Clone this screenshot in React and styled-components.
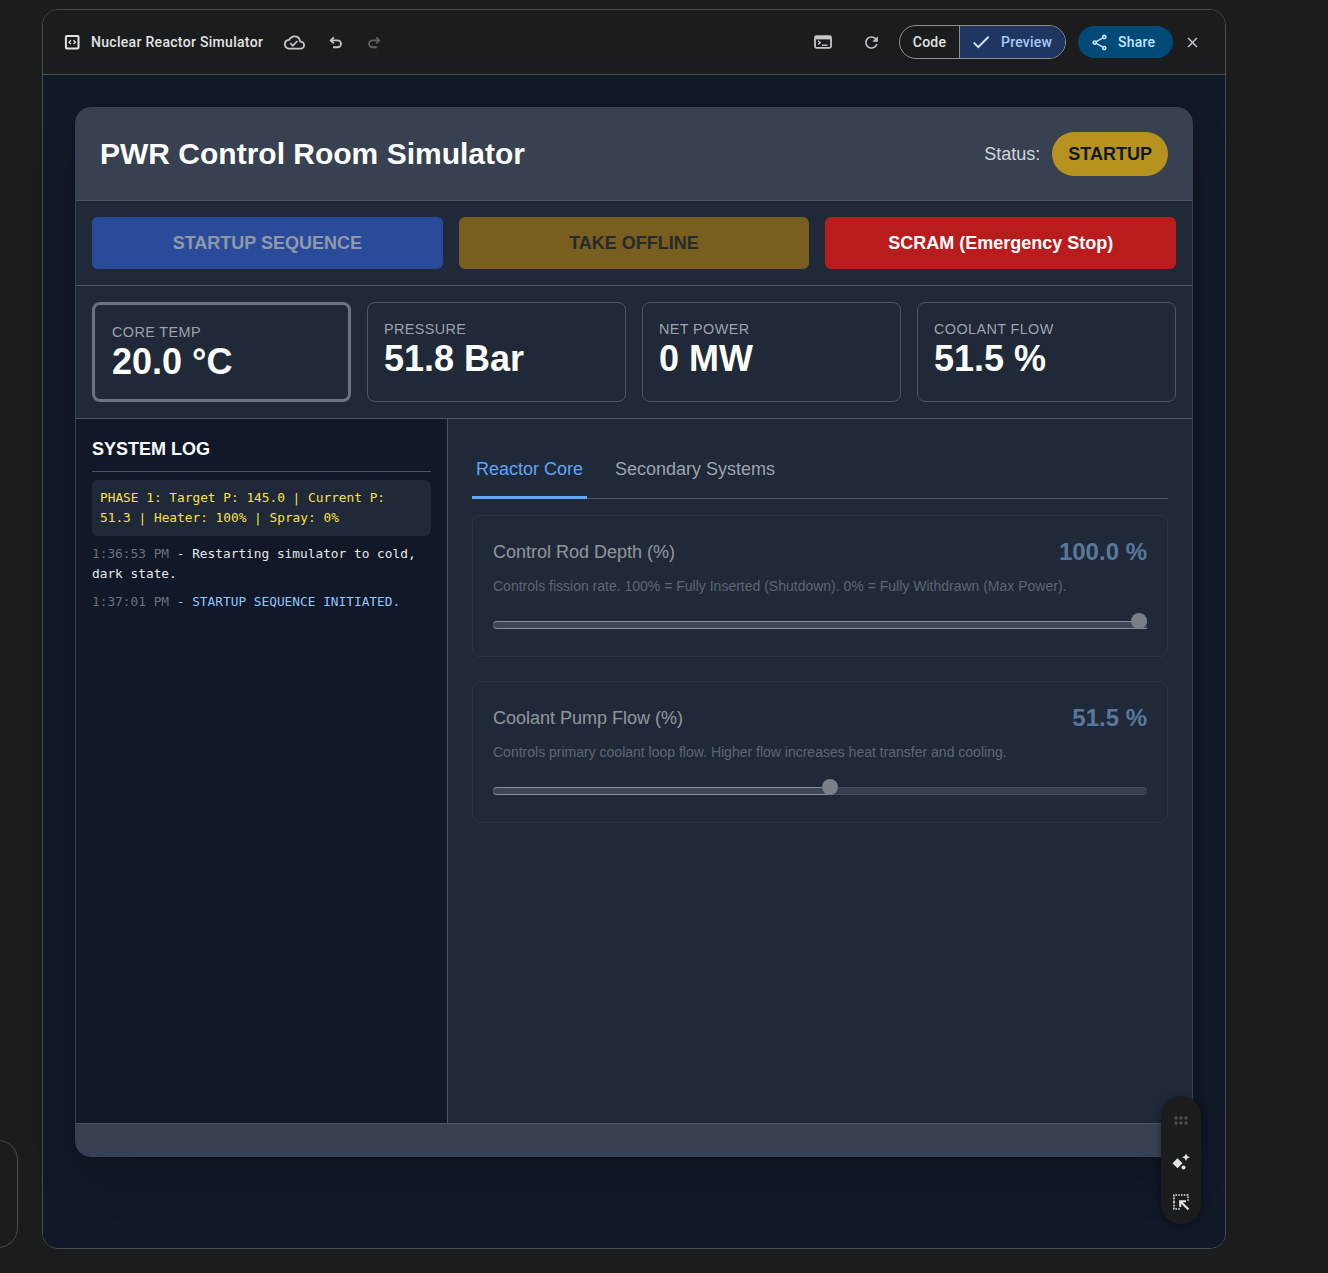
import React from 'react';
import styled, { createGlobalStyle } from 'styled-components';
import { MdOutlineCloudDone, MdRefresh, MdCheck, MdOutlineShare, MdClose } from 'react-icons/md';

const Global = createGlobalStyle`
  html, body { margin: 0; padding: 0; background: #1b1c1d; }
  body { width: 1328px; height: 1273px; overflow: hidden; position: relative; font-family: "Liberation Sans", Arial, sans-serif; }
  * { box-sizing: border-box; }
`;

const Page = styled.div`
  padding: 9px 102px 24px 42px;
  height: 1273px;
`;
const Modal = styled.div`
  position: relative;
  height: 1240px;
  border: 1px solid #4a4b4d;
  border-radius: 16px;
  display: flex;
  flex-direction: column;
  background: #111827;
`;
const TopBar = styled.header`
  height: 65px;
  flex: none;
  background: #1b1c1d;
  border-bottom: 1px solid #4a4b4d;
  border-radius: 15px 15px 0 0;
  display: flex;
  align-items: center;
  padding: 0 24px 0 21px;
  font-family: Roboto, sans-serif;
  letter-spacing: .2px;
`;
const AppIcon = styled.svg`
  width: 16px; height: 16px; flex: none; margin-right: 11px;
`;
const AppName = styled.span`
  color: #e3e3e3; font-size: 14px; font-weight: 500; letter-spacing: .3px; margin-right: 21px; white-space: nowrap;
`;
const BarIcon = styled.span`
  display: inline-flex;
  color: ${p => p.$c || '#c4c7c5'};
  font-size: ${p => p.$s || 18}px;
  margin-right: ${p => p.$mr || 0}px;
`;
const Spacer = styled.div`flex: 1;`;
const Toggle = styled.div`
  display: flex; height: 34px; width: 167px; border: 1px solid #8e918f; border-radius: 17px; overflow: hidden; margin-right: 12px;
`;
const ToggleCode = styled.div`
  width: 60px; border-right: 1px solid #8e918f; color: #e3e3e3; font-size: 14px; font-weight: 500;
  display: flex; align-items: center; justify-content: center;
`;
const TogglePreview = styled.div`
  flex: 1; background: #1f3760; color: #a8c7fa; font-size: 14px; font-weight: 500;
  display: flex; align-items: center; gap: 9px; padding-left: 10px;
  & svg { color: #d3e3fd; }
`;
const ShareBtn = styled.div`
  width: 95px; height: 32px; border-radius: 16px; background: #004a77; color: #c2e7ff; font-size: 14px; font-weight: 500;
  display: flex; align-items: center; gap: 9px; padding-left: 12px; margin-right: 11px;
`;
const Stage = styled.div`
  flex: 1; padding: 32px; background: #111827; border-radius: 0 0 15px 15px;
`;
const Sim = styled.div`
  height: 1050px; border-radius: 16px; overflow: hidden; background: #374151; border: 1px solid #374151;
  display: flex; flex-direction: column; box-shadow: 0 25px 50px -12px rgba(0,0,0,.25);
`;
const SimHeader = styled.div`
  height: 93px; flex: none; background: #374151; border-bottom: 1px solid #4b5563;
  display: flex; align-items: center; justify-content: space-between; padding: 0 24px;
`;
const Title = styled.h1`
  margin: 0; color: #fff; font-size: 30px; font-weight: 700;
`;
const StatusWrap = styled.div`
  display: flex; align-items: center; gap: 12px; color: #d1d5db; font-size: 18px;
`;
const Badge = styled.div`
  height: 44px; padding: 0 16px; border-radius: 22px; background: #b7921f; color: #111827; font-size: 18px; font-weight: 700;
  display: flex; align-items: center;
`;
const Controls = styled.div`
  height: 85px; flex: none; background: #1f2937; border-bottom: 1px solid #4b5563;
  display: grid; grid-template-columns: repeat(3, 1fr); gap: 16px; padding: 16px;
`;
const ActionBtn = styled.div`
  height: 52px; border-radius: 6px; background: ${p => p.$bg}; color: ${p => p.$fg}; font-size: 18px; font-weight: 700;
  display: flex; align-items: center; justify-content: center;
`;
const Stats = styled.div`
  height: 133px; flex: none; background: #1f2937; border-bottom: 1px solid #4b5563;
  display: grid; grid-template-columns: repeat(4, 1fr); gap: 16px; padding: 16px;
`;
const Stat = styled.div`
  height: 100px; background: #1f2937; border-radius: 8px;
  border: ${p => p.$hot ? '3px solid #6b7280' : '1px solid #4b5563'};
  padding: ${p => p.$hot ? '19px 17px' : '18px 16px'};
`;
const StatLabel = styled.div`
  color: #9ca3af; font-size: 14.4px; line-height: 17px; letter-spacing: .4px;
`;
const StatValue = styled.div`
  color: #fff; font-size: 36px; font-weight: 700; line-height: 42px;
`;
const Main = styled.div`
  flex: 1; display: grid; grid-template-columns: 372px 1fr; min-height: 0; background: #1f2937;
`;
const LogPane = styled.aside`
  background: #111827; border-right: 1px solid #4b5563; padding: 16px;
`;
const LogTitle = styled.h2`
  margin: 0 0 8px; color: #fff; font-size: 18px; font-weight: 700; line-height: 28px; padding-bottom: 8px; border-bottom: 1px solid #4b5563;
`;
const LogBody = styled.div`
  font-family: "DejaVu Sans Mono", monospace; font-size: 12.8px; line-height: 20px;
`;
const LogPhase = styled.div`
  background: #1f2937; border-radius: 6px; padding: 8px; color: #fde047; margin-bottom: 8px;
`;
const LogLine = styled.div`
  color: ${p => p.$c || '#e5e7eb'}; margin-bottom: 8px;
`;
const LogTime = styled.span`
  color: #6b7280;
`;
const RightPane = styled.section`
  padding: 16px 24px;
`;
const Tabs = styled.div`
  display: flex; border-bottom: 1px solid #4b5563; margin-bottom: 16px; height: 64px; padding-top: 5px;
`;
const Tab = styled.div`
  padding: 17px 4px 0; margin-right: 24px; font-size: 18px; line-height: 24px; height: 59px;
  color: ${p => p.$on ? '#60a5fa' : '#9ca3af'};
  border-bottom: 3px solid ${p => p.$on ? '#60a5fa' : 'transparent'};
  margin-bottom: -1px;
`;
const Card = styled.div`
  height: 142px; border: 1px solid #374151; border-radius: 8px; padding: 20px; margin-bottom: 24px; background: #1f2937; opacity: .5;
`;
const CardHead = styled.div`
  display: flex; justify-content: space-between; align-items: center; height: 32px;
`;
const CardLabel = styled.div`
  color: #fff; font-size: 18px; font-weight: 400;
`;
const CardValue = styled.div`
  color: #93c5fd; font-size: 24px; font-weight: 700;
`;
const CardHelp = styled.div`
  color: #9ca3af; font-size: 14px; line-height: 20px; margin-top: 8px;
`;
const Track = styled.div`
  position: relative; height: 8px; margin-top: 25px; border-radius: 4px; background: #4b5563;
  border-top: 1px solid #6b7280; border-bottom: 1px solid #6b7280;
`;
const Fill = styled.div`
  height: 8px; margin-top: -1px; border-radius: 4px 0 0 4px; background: #5b6575;
  border-top: 1px solid #f3f4f6; border-bottom: 1px solid #f3f4f6;
`;
const Thumb = styled.div`
  position: absolute; top: -9px; width: 16px; height: 16px; border-radius: 50%; background: #d1d5db;
`;
const SimFooter = styled.div`
  height: 33px; flex: none; background: #374151; border-top: 1px solid #4b5563;
`;
const Floater = styled.div`
  position: absolute; left: 1118px; top: 1086px; width: 40px; height: 128px; border-radius: 20px; background: #1b1c1d;
  box-shadow: 0 2px 8px rgba(0,0,0,.35);
  display: flex; flex-direction: column; align-items: center; padding-top: 20px;
`;
const FloatIcon = styled.svg`
  flex: none; margin-top: ${p => p.$mt || 0}px;
`;
const SideStub = styled.div`
  position: absolute; left: -30px; top: 1140px; width: 48px; height: 108px; border: 1px solid #4a4b4d; border-radius: 20px;
`;

const Slider = ({ pct }) => (
  <Track>
    <Fill style={{ width: `${pct}%` }} />
    <Thumb style={{ left: `calc(${pct}% - ${pct * 0.16}px)` }} />
  </Track>
);

const Turn = ({ flip, color }) => (
  <svg width="16" height="16" viewBox="0 0 16 16" fill="none" stroke={color} strokeWidth="1.9" style={flip ? { transform: 'scaleX(-1)' } : undefined}>
    <path d="M5.8 3.4 2.8 6.4l3 3" />
    <path d="M2.8 6.4h6.7a3.2 3.2 0 0 1 0 6.9H5" />
  </svg>
);

export default function App() {
  return (
    <>
      <Global />
      <SideStub />
      <Page>
        <Modal>
          <TopBar>
            <AppIcon viewBox="0 0 16 16">
              <rect x="1.9" y="2" width="12.6" height="12.4" rx="1" fill="none" stroke="#e3e3e3" strokeWidth="2" />
              <path d="M6.9 6.3 5 8.2l1.9 1.9M9.5 6.3l1.9 1.9-1.9 1.9" fill="none" stroke="#e3e3e3" strokeWidth="1.3" />
            </AppIcon>
            <AppName>Nuclear Reactor Simulator</AppName>
            <BarIcon $s={21} $mr={23}><MdOutlineCloudDone /></BarIcon>
            <BarIcon $mr={22}><Turn color="#c4c7c5" /></BarIcon>
            <BarIcon><Turn flip color="#5f6368" /></BarIcon>
            <Spacer />
            <BarIcon $mr={30}>
              <svg width="18" height="18" viewBox="0 0 18 18">
                <rect x="1" y="3.2" width="16" height="11.6" rx="1.5" fill="none" stroke="#c4c7c5" strokeWidth="1.8" />
                <rect x="1" y="3" width="16" height="3.4" fill="#c4c7c5" />
                <path d="m4 7.8 2.3 1.9L4 11.6" fill="none" stroke="#c4c7c5" strokeWidth="1.3" />
                <path d="M8 12.2h5.5" stroke="#c4c7c5" strokeWidth="1.4" />
              </svg>
            </BarIcon>
            <BarIcon $s={19} $mr={18}><MdRefresh /></BarIcon>
            <Toggle>
              <ToggleCode>Code</ToggleCode>
              <TogglePreview><MdCheck size={22} />Preview</TogglePreview>
            </Toggle>
            <ShareBtn><MdOutlineShare size={19} />Share</ShareBtn>
            <BarIcon $s={17}><MdClose /></BarIcon>
          </TopBar>
          <Stage>
            <Sim>
              <SimHeader>
                <Title>PWR Control Room Simulator</Title>
                <StatusWrap>Status: <Badge>STARTUP</Badge></StatusWrap>
              </SimHeader>
              <Controls>
                <ActionBtn $bg="#294b9a" $fg="#8f99a8">STARTUP SEQUENCE</ActionBtn>
                <ActionBtn $bg="#785e1f" $fg="#272a2c">TAKE OFFLINE</ActionBtn>
                <ActionBtn $bg="#b91c1c" $fg="#fff">SCRAM (Emergency Stop)</ActionBtn>
              </Controls>
              <Stats>
                <Stat $hot><StatLabel>CORE TEMP</StatLabel><StatValue>20.0 °C</StatValue></Stat>
                <Stat><StatLabel>PRESSURE</StatLabel><StatValue>51.8 Bar</StatValue></Stat>
                <Stat><StatLabel>NET POWER</StatLabel><StatValue>0 MW</StatValue></Stat>
                <Stat><StatLabel>COOLANT FLOW</StatLabel><StatValue>51.5 %</StatValue></Stat>
              </Stats>
              <Main>
                <LogPane>
                  <LogTitle>SYSTEM LOG</LogTitle>
                  <LogBody>
                    <LogPhase>PHASE 1: Target P: 145.0 | Current P: 51.3 | Heater: 100% | Spray: 0%</LogPhase>
                    <LogLine><LogTime>1:36:53 PM</LogTime> - Restarting simulator to cold, dark state.</LogLine>
                    <LogLine $c="#93c5fd"><LogTime>1:37:01 PM</LogTime> - STARTUP SEQUENCE INITIATED.</LogLine>
                  </LogBody>
                </LogPane>
                <RightPane>
                  <Tabs>
                    <Tab $on>Reactor Core</Tab>
                    <Tab>Secondary Systems</Tab>
                  </Tabs>
                  <Card>
                    <CardHead><CardLabel>Control Rod Depth (%)</CardLabel><CardValue>100.0 %</CardValue></CardHead>
                    <CardHelp>Controls fission rate. 100% = Fully Inserted (Shutdown). 0% = Fully Withdrawn (Max Power).</CardHelp>
                    <Slider pct={100} />
                  </Card>
                  <Card>
                    <CardHead><CardLabel>Coolant Pump Flow (%)</CardLabel><CardValue>51.5 %</CardValue></CardHead>
                    <CardHelp>Controls primary coolant loop flow. Higher flow increases heat transfer and cooling.</CardHelp>
                    <Slider pct={51.5} />
                  </Card>
                </RightPane>
              </Main>
              <SimFooter />
            </Sim>
          </Stage>
          <Floater>
            <FloatIcon width="14" height="9" viewBox="0 0 14 9" fill="#4a4b4d">
              <circle cx="2" cy="2" r="1.8" /><circle cx="7" cy="2" r="1.8" /><circle cx="12" cy="2" r="1.8" />
              <circle cx="2" cy="7" r="1.8" /><circle cx="7" cy="7" r="1.8" /><circle cx="12" cy="7" r="1.8" />
            </FloatIcon>
            <FloatIcon $mt={27} width="20" height="20" viewBox="0 0 20 20" fill="#e3e3e3">
              <path d="M6.5 6.3 11.5 11.3 6.5 16.3 1.5 11.3Z" />
              <path d="M15 1.5 16.2 4 18.8 5.2 16.2 6.4 15 9 13.8 6.4 11.2 5.2 13.8 4Z" />
              <circle cx="12.5" cy="15.5" r="2" />
            </FloatIcon>
            <FloatIcon $mt={21} width="18" height="18" viewBox="0 0 18 18" fill="none">
              <path d="M2 9V2h14v7M2 9v7h6" stroke="#e3e3e3" strokeWidth="1.6" strokeDasharray="1.6 1.2" />
              <path d="M16.5 16.5 9 9M8.2 14V8.2H14" stroke="#e3e3e3" strokeWidth="2.1" />
            </FloatIcon>
          </Floater>
        </Modal>
      </Page>
    </>
  );
}
